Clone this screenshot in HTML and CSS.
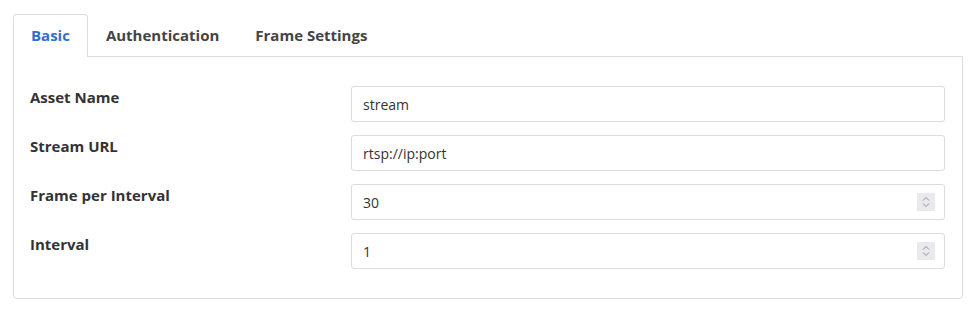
FILE: index.html
```html
<!DOCTYPE html>
<html lang="en">
<head>
  <meta charset="UTF-8">
  <title>Stream Asset</title>
  <link rel="stylesheet" href="styles.css">
</head>
<body>
  <div id="asset-form">
    <!-- Tabs -->
    <ul class="tabs">
      <li class="tab active">Basic</li>
      <li class="tab">Authentication</li>
      <li class="tab">Frame Settings</li>
    </ul>

    <div class="tab-panel">
      <div class="form-row">
        <label for="asset-name">Asset Name</label>
        <input type="text" id="asset-name" value="stream">
      </div>
      <div class="form-row">
        <label for="stream-url">Stream URL</label>
        <input type="text" id="stream-url" value="rtsp://ip:port">
      </div>
      <div class="form-row">
        <label for="frames">Frame per Interval</label>
        <div class="number-field">
          <input type="text" id="frames" value="30">
          <span class="spin">
            <svg width="10" height="14" viewBox="0 0 10 14"><path d="M2 5.5 L5 2.5 L8 5.5 M2 8.5 L5 11.5 L8 8.5" fill="none" stroke="#8f8f99" stroke-width="1"/></svg>
          </span>
        </div>
      </div>
      <div class="form-row">
        <label for="interval">Interval</label>
        <div class="number-field">
          <input type="text" id="interval" value="1">
          <span class="spin">
            <svg width="10" height="14" viewBox="0 0 10 14"><path d="M2 5.5 L5 2.5 L8 5.5 M2 8.5 L5 11.5 L8 8.5" fill="none" stroke="#8f8f99" stroke-width="1"/></svg>
          </span>
        </div>
      </div>
    </div>
  </div>
</body>
</html>
```

FILE: styles.css
```css
html, body {
  margin: 0;
  padding: 0;
  background: #fff;
  font-family: "Open Sans", "Noto Sans", sans-serif;
  color: #333;
}
#asset-form {
  padding: 14px 12px 0 13px;
}
.tabs {
  display: flex;
  width: fit-content;
  list-style: none;
  margin: 0 0 -1px;
  padding: 0 10px 0 0;
  border-bottom: 1px solid #dcdcdc;
  position: relative;
  z-index: 1;
}
.tab {
  height: 41px;
  line-height: 41px;
  padding: 0 17px;
  font-size: 15px;
  font-weight: bold;
  white-space: nowrap;
  color: #444;
  border: 1px solid transparent;
  border-bottom: none;
  border-radius: 4px 4px 0 0;
}
.tab.active {
  color: #2f6fd2;
  background: #fff;
  border-color: #dcdcdc;
  height: 42px;
  margin-bottom: -1px;
}
.tab-panel {
  border: 1px solid #dcdcdc;
  border-radius: 0 0 4px 4px;
  padding: 29px 17px 29px 16px;
  display: flex;
  flex-direction: column;
  gap: 13px;
}
.form-row {
  display: grid;
  grid-template-columns: 321px 1fr;
  align-items: start;
}
.form-row label {
  font-size: 15px;
  font-weight: bold;
  color: #333;
  padding-top: 1px;
}
.form-row input {
  box-sizing: border-box;
  width: 100%;
  height: 36px;
  padding: 0 11px;
  border: 1px solid #dcdcdc;
  border-radius: 3px;
  font-family: inherit;
  font-size: 14px;
  color: #333;
  outline: none;
}
.number-field {
  position: relative;
}
.spin {
  position: absolute;
  right: 10px;
  top: 9px;
  width: 18px;
  height: 18px;
  background: #e9e9ee;
  display: flex;
  align-items: center;
  justify-content: center;
}
```
